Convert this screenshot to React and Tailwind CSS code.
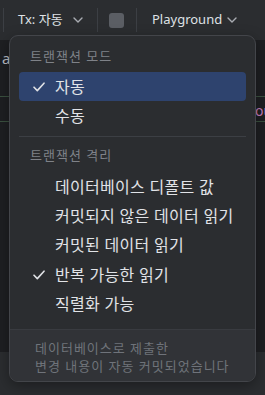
import React from "react";

function Chevron({ className = "" }) {
  return (
    <svg width="10" height="6" viewBox="0 0 10 6" className={className} fill="none">
      <path d="M1 1L5 5L9 1" stroke="#a9acb2" strokeWidth="1.4" strokeLinecap="round" strokeLinejoin="round" />
    </svg>
  );
}

function Check() {
  return (
    <svg width="12" height="10" viewBox="0 0 12 10" fill="none">
      <path d="M1 5.2L4.3 8.6L11 1.2" stroke="#dfe1e5" strokeWidth="1.6" strokeLinecap="round" strokeLinejoin="round" />
    </svg>
  );
}

function Item({ label, checked, selected, tall }) {
  return (
    <div
      className={
        "mx-[9px] flex items-center rounded-[4px] " +
        (tall ? "h-[29.4px] " : "h-[29px] ") +
        (selected ? "bg-[#2e436e]" : "")
      }
    >
      <div className="w-[36px] flex items-center pl-[14px]">{checked ? <Check /> : null}</div>
      <span className="text-[16px] tracking-[0.3px] text-[#e1e3e7] leading-none whitespace-nowrap">{label}</span>
    </div>
  );
}

function Header({ label, className = "" }) {
  return (
    <div className={"mx-[9px] flex items-center pl-[11px] text-[13px] tracking-[1px] text-[#7f8288] " + className}>
      {label}
    </div>
  );
}

export default function App() {
  return (
    <div className="w-[265px] h-[395px] relative overflow-hidden bg-[#1e1f22] flex flex-col font-['Noto_Sans','Noto_Sans_CJK_KR',sans-serif]">
      {/* Top toolbar */}
      <div className="h-10 shrink-0 bg-[#2b2d30] flex items-center text-[13px] text-[#dfe1e5]">
        <div className="ml-[3px] w-px h-6 bg-[#3c3f44]" />
        <span className="ml-[14px] w-[55px] whitespace-nowrap">Tx: 자동</span>
        <Chevron />
        <div className="ml-[14px] w-px h-6 bg-[#3c3f44]" />
        <div className="ml-[11px] w-[15px] h-[15px] rounded-[3px] bg-[#5b5e64]" />
        <div className="ml-[12px] w-px h-6 bg-[#3c3f44]" />
        <span className="ml-[15px] w-[75px] whitespace-nowrap">Playground</span>
        <Chevron />
      </div>

      {/* Background content */}
      <div className="flex-1 flex flex-col">
        <div className="h-[57px] border-b border-[#3b5140] pl-[2px] pt-[7px] text-[15px] text-[#bcbec4]">a</div>
        <div className="h-[25px] border-b border-[#3b5140] pl-[255px] pt-[3px] text-[14px] text-[#c77dbb] whitespace-nowrap overflow-hidden">ou</div>
        <div className="flex-1" />
      </div>
      <div className="h-[43px] shrink-0 bg-[#2b2d30]" />

      {/* Dropdown menu */}
      <div className="absolute left-[9px] top-[35px] w-[247px] rounded-[9px] border border-[#43454a] bg-[#2b2d30] shadow-[0_4px_14px_rgba(0,0,0,0.35)] overflow-hidden flex flex-col">
        <div className="pt-[7px] pb-[10px] flex flex-col">
          <Header label="트랜잭션 모드" className="h-[29px] pb-[2px]" />
          <Item label="자동" checked selected />
          <Item label="수동" />
          <div className="mx-[9px] mt-[6px] mb-[5px] h-px bg-[#3c3f44]" />
          <Header label="트랜잭션 격리" className="h-[30px] pb-[3px]" />
          <Item tall label="데이터베이스 디폴트 값" />
          <Item tall label="커밋되지 않은 데이터 읽기" />
          <Item tall label="커밋된 데이터 읽기" />
          <Item tall label="반복 가능한 읽기" checked />
          <Item tall label="직렬화 가능" />
        </div>
        <div className="border-t border-[#393b40] bg-[#313337] pl-[25px] pt-[9px] pb-[6px] text-[13px] tracking-[1px] leading-[18px] text-[#6f737a]">
          <div>데이터베이스로 제출한</div>
          <div>변경 내용이 자동 커밋되었습니다</div>
        </div>
      </div>
    </div>
  );
}
